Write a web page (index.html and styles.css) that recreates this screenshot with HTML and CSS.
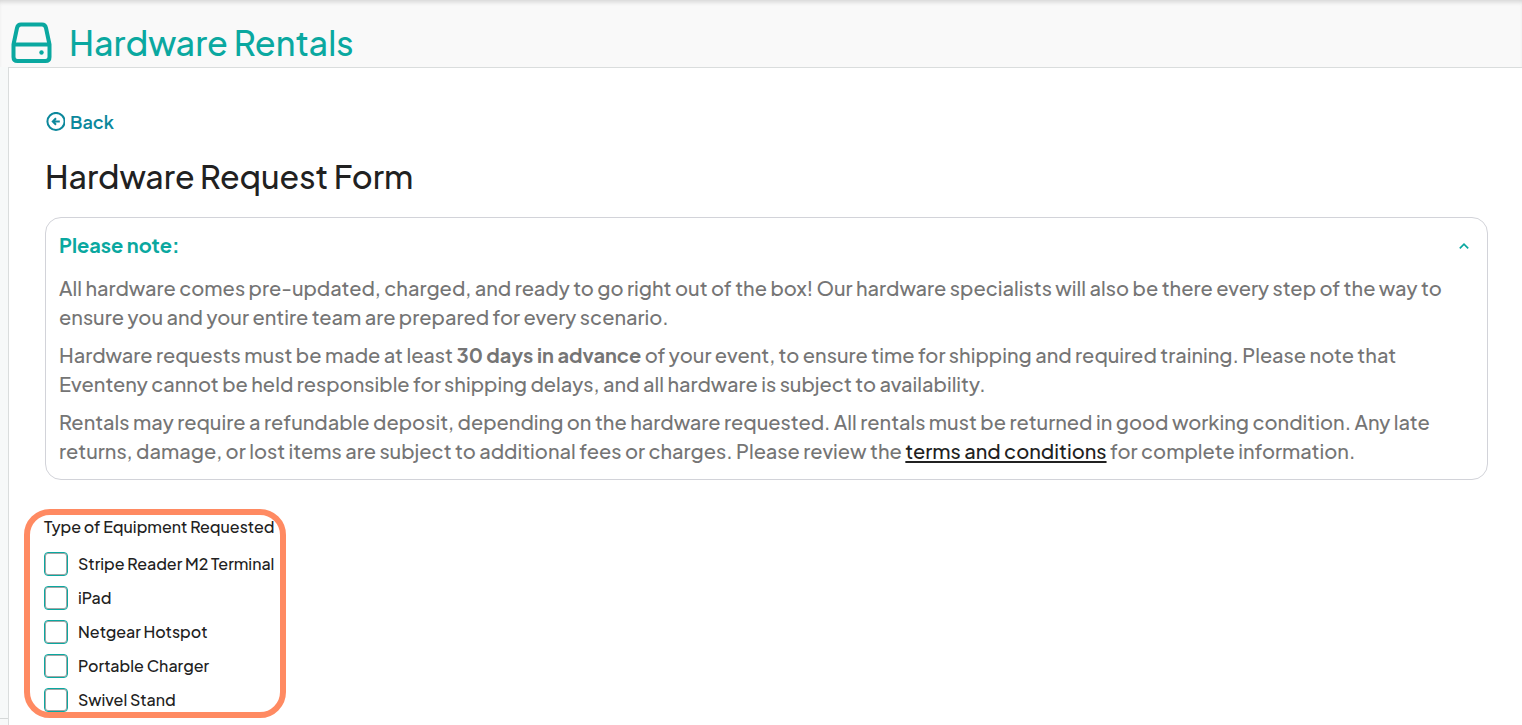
FILE: index.html
```html
<!DOCTYPE html>
<html lang="en">
<head>
    <meta charset="UTF-8">
    <meta name="viewport" content="width=device-width, initial-scale=1.0">
    <title>Hardware Rentals</title>
    <link rel="stylesheet" href="styles.css">
</head>
<body>
    <!-- Page title -->
    <header class="page-header">
        <svg class="drive-icon" viewBox="0 0 42 42" fill="none" stroke="currentColor" stroke-width="4" stroke-linejoin="round" aria-hidden="true">
            <path d="M2.5 22.5 L6 6 Q6.8 2.500 10 2.500 H31 Q34.2 2.500 35 6 L38.5 22.5 V35 Q38.5 39 34.5 39 H6.5 Q2.5 39 2.5 35 Z"/>
            <path d="M2.5 22.5 H38.5"/>
            <circle cx="30.5" cy="30.5" r="2.2" fill="currentColor" stroke="none"/>
        </svg>
        <h1>Hardware Rentals</h1>
    </header>

    <div class="layout">
        <aside class="gutter">
            <div class="gutter-end"></div>
        </aside>

        <main class="panel">
            <a class="back" href="#">
                <svg class="back-icon" viewBox="0 0 20 20" fill="none" stroke="currentColor" stroke-width="2" aria-hidden="true">
                    <circle cx="11" cy="9.5" r="8.6"/>
                    <path d="M14.8 9.5 H8.5 M11 6.3 L7.8 9.5 L11 12.7"/>
                </svg>
                Back
            </a>

            <h2>Hardware Request Form</h2>

            <!-- Note -->
            <section class="note">
                <div class="note-header">
                    <h3>Please note:</h3>
                    <button class="toggle" type="button" aria-label="Collapse note" aria-expanded="true">
                        <svg viewBox="0 0 10 6" fill="none" stroke="currentColor" stroke-width="1.7" aria-hidden="true">
                            <path d="M0.8 5.3 L5 1.2 L9.2 5.3"/>
                        </svg>
                    </button>
                </div>
                <p>All hardware comes pre-updated, charged, and ready to go right out of the box! Our hardware specialists will also be there every step of the way to ensure you and your entire team are prepared for every scenario.</p>
                <p>Hardware requests must be made at least <strong>30 days in advance</strong> of your event, to ensure time for shipping and required training. Please note that Eventeny cannot be held responsible for shipping delays, and all hardware is subject to availability.</p>
                <p>Rentals may require a refundable deposit, depending on the hardware requested. All rentals must be returned in good working condition. Any late returns, damage, or lost items are subject to additional fees or charges. Please review the <a href="#">terms and conditions</a> for complete information.</p>
            </section>

            <!-- Equipment -->
            <form class="equipment" role="group" aria-labelledby="equipment-title">
                <p class="equipment-title" id="equipment-title">Type of Equipment Requested</p>
                <label><input type="checkbox" name="equipment" value="stripe-m2">Stripe Reader M2 Terminal</label>
                <label><input type="checkbox" name="equipment" value="ipad">iPad</label>
                <label><input type="checkbox" name="equipment" value="hotspot">Netgear Hotspot</label>
                <label><input type="checkbox" name="equipment" value="charger">Portable Charger</label>
                <label><input type="checkbox" name="equipment" value="stand">Swivel Stand</label>
            </form>
        </main>
    </div>
</body>
</html>
```
FILE: styles.css
```css
/* General styling */
* {
    box-sizing: border-box;
    margin: 0;
    padding: 0;
}
body {
    display: flex;
    flex-direction: column;
    min-height: 100vh;
    color: #212121;
    font-family: 'Plus Jakarta Sans', Inter, sans-serif;
    font-size: 16px;
    background-color: #f9f9f9;
}
/* Page title */
.page-header {
    display: flex;
    align-items: center;
    gap: 16px;
    height: 67px;
    padding: 19px 11px 0;
    color: #0aa8a0;
    box-shadow: inset 0 4px 4px -2px #d4d4d4;
}
.drive-icon {
    width: 42px;
    height: 42px;
}
h1 {
    font-size: 34px;
    font-weight: 500;
    line-height: 48px;
}
/* Layout */
.layout {
    display: flex;
    flex: 1;
}
.gutter {
    display: flex;
    flex-direction: column;
    justify-content: flex-end;
    width: 8px;
    background-color: #f7f9f9;
}
.gutter-end {
    height: 7px;
    border-top: 1px solid #d5d8d8;
}
.panel {
    flex: 1;
    padding: 40px 34px 7px 36px;
    border-top: 1px solid #dadddd;
    border-left: 1px solid #dadddd;
    background-color: white;
}
.back {
    display: inline-flex;
    align-items: center;
    gap: 5px;
    color: #0c889c;
    font-size: 18px;
    font-weight: 600;
    line-height: 28px;
    text-decoration: none;
}
.back-icon {
    width: 20px;
    height: 20px;
}
h2 {
    margin: 20px 0 21px;
    font-size: 32px;
    font-weight: 500;
    line-height: 40px;
}
/* Note */
.note {
    padding: 12px 13px 14px;
    border: 1px solid #d2d3d9;
    border-radius: 16px;
    color: #757575;
    font-size: 20px;
    font-weight: 500;
    line-height: 29px;
}
.note-header {
    display: flex;
    align-items: center;
    justify-content: space-between;
    margin-bottom: 14px;
    color: #0aa8a0;
}
h3 {
    font-size: 20px;
    font-weight: 700;
}
.toggle {
    display: flex;
    padding: 7px 5px 5px;
    border: none;
    color: inherit;
    background: none;
    cursor: pointer;
}
.toggle svg {
    width: 10px;
    height: 6px;
}
.note p + p {
    margin-top: 9px;
}
.note a {
    color: #212121;
    text-underline-offset: 2px;
}
/* Equipment */
.equipment {
    display: flex;
    flex-direction: column;
    gap: 10px;
    width: 262px;
    margin: 29px 0 0 -21px;
    padding: 0 0 0 14px;
    border: 6px solid #ff8a62;
    border-radius: 26px;
    font-weight: 500;
    line-height: 24px;
    white-space: nowrap;
}
.equipment-title {
    margin-bottom: 4px;
    line-height: 23px;
}
.equipment label {
    display: flex;
    align-items: center;
    gap: 10px;
}
.equipment input {
    appearance: none;
    width: 24px;
    height: 24px;
    border: 1px solid #0aa8a0;
    border-radius: 4px;
    background-color: white;
    box-shadow: inset 0 0 0 1px #a5a5a5;
}
```
